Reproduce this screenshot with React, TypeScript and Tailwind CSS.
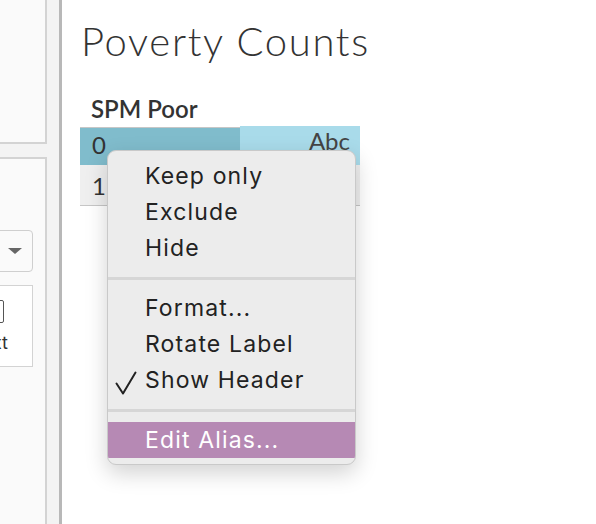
import React from 'react';

const MenuItem: React.FC<{ label: string; checked?: boolean; active?: boolean }> = ({ label, checked, active }) => (
  <div
    className={`relative h-[36px] leading-[36px] pl-[37px] text-[23px] tracking-[0.05em] ${
      active ? 'bg-[#b689b4] text-white' : 'text-[#222]'
    }`}
  >
    {checked && (
      <svg className="absolute left-[7px] top-[9px]" width="22" height="24" viewBox="0 0 22 24" fill="none">
        <path d="M1.5 12.5 L8 22.5 L20.5 1.5" stroke="#222" strokeWidth="2" strokeLinecap="round" strokeLinejoin="round" />
      </svg>
    )}
    {label}
  </div>
);

const Separator: React.FC = () => <div className="mt-[11px] mb-[10px] h-[3px] bg-[#d6d6d6]" />;

export default function App() {
  return (
    <div className="flex w-[596px] h-[524px] overflow-hidden bg-white font-['Lato',sans-serif]">
      {/* left shelf */}
      <div className="flex flex-col w-[59px] shrink-0 bg-[#f3f3f3]">
        <div className="h-[144px] w-[47px] shrink-0 bg-[#fafafa] border-r-2 border-b-2 border-[#d3d3d3]" />
        <div className="mt-[13px] flex-1 w-[47px] bg-[#fafafa] border-r-2 border-t-2 border-[#d3d3d3] overflow-hidden">
          <div className="mt-[71px] -ml-[100px] w-[133px] h-[42px] flex items-center justify-end pr-[10px] rounded-[4px] border border-[#cfcfcf] bg-[#fafafa]">
            <svg width="14" height="6" viewBox="0 0 14 6">
              <polygon points="0,0 14,0 7,6" fill="#666" />
            </svg>
          </div>
          <div className="mt-[13px] -ml-[100px] w-[133px] h-[82px] flex flex-col items-end border border-[#d3d3d3] bg-white">
            <div className="mt-[14px] mr-[28px] w-[20px] h-[23px] rounded-[2px] border-[1.5px] border-[#555]" />
            <div className="mt-[9px] mr-[24px] text-[18px] leading-[22px] text-[#333] font-['Inter',sans-serif]">Text</div>
          </div>
        </div>
      </div>
      <div className="w-[3px] shrink-0 bg-[#b8b8b8]" />

      {/* view */}
      <div className="relative flex-1 pl-[18px]">
        <div className="mt-[17px] pl-[1px] text-[40px] leading-[48px] font-light tracking-[0.042em] text-[#333]">Poverty Counts</div>
        <div className="mt-[29px] pl-[11px] text-[24px] leading-[29px] font-semibold text-[#333]">SPM Poor</div>
        <div className="mt-[4px] w-[280px] border-t border-b border-[#c6c6c6] text-[24px] text-[#333]">
          <div className="flex h-[37px]">
            <div className="w-[160px] bg-[#80bccc] pl-[12px] pt-[2px] leading-[29px]">0</div>
            <div className="flex-1 bg-[#a9dbea] pr-[10px] text-right leading-[29px] -mt-[2px] text-[#444]">Abc</div>
          </div>
          <div className="h-[40px] bg-[#efefef] pl-[12px] pt-[6px] leading-[29px]">1</div>
        </div>

        {/* context menu */}
        <div className="absolute left-[45px] top-[150px] w-[249px] h-[315px] pt-[7px] rounded-[9px] bg-[#ececec] border border-[#c9c9c9] shadow-[0_8px_22px_rgba(0,0,0,0.18)] overflow-hidden font-['Inter',sans-serif]">
          <MenuItem label="Keep only" />
          <MenuItem label="Exclude" />
          <MenuItem label="Hide" />
          <Separator />
          <MenuItem label="Format..." />
          <MenuItem label="Rotate Label" />
          <MenuItem label="Show Header" checked />
          <Separator />
          <MenuItem label="Edit Alias..." active />
        </div>
      </div>
    </div>
  );
}
